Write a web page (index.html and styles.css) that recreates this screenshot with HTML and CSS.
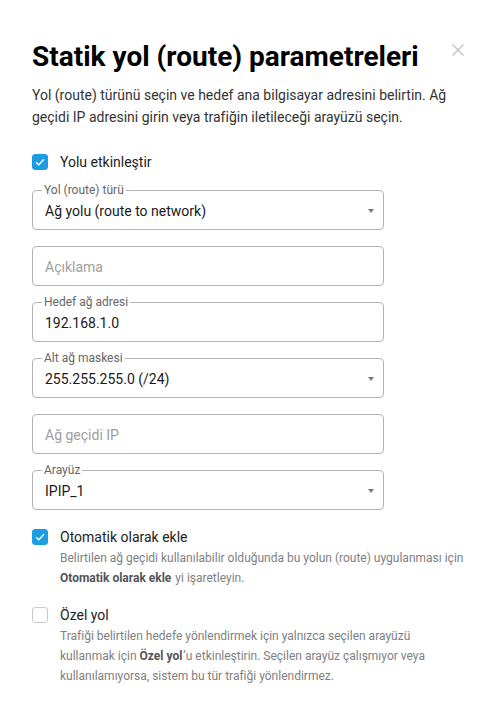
FILE: index.html
```html
<!DOCTYPE html>
<html lang="tr">
<head>
<meta charset="utf-8">
<title>Statik yol (route) parametreleri</title>
<link rel="stylesheet" href="styles.css">
</head>
<body>
<div class="dialog">
  <div class="header">
    <h1 class="title">Statik yol (route) parametreleri</h1>
    <button class="close" aria-label="Kapat">
      <svg width="12" height="12" viewBox="0 0 12 12"><path d="M0.5 0.5 L11.5 11.5 M11.5 0.5 L0.5 11.5" stroke="#c6c6c6" stroke-width="1.5" fill="none"/></svg>
    </button>
  </div>
  <p class="intro">Yol (route) türünü seçin ve hedef ana bilgisayar adresini belirtin. Ağ geçidi IP adresini girin veya trafiğin iletileceği arayüzü seçin.</p>

  <label class="check-row first">
    <span class="box checked"><svg width="10" height="8" viewBox="0 0 10 8"><path d="M1 4.2 L3.8 6.8 L9 1.2" stroke="#fff" stroke-width="1.3" fill="none"/></svg></span>
    <span class="check-label">Yolu etkinleştir</span>
  </label>

  <div class="fields">
    <div class="field select">
      <span class="legend">Yol (route) türü</span>
      <span class="value">Ağ yolu (route to network)</span>
      <span class="arrow"></span>
    </div>
    <div class="field">
      <span class="value placeholder">Açıklama</span>
    </div>
    <div class="field">
      <span class="legend">Hedef ağ adresi</span>
      <span class="value">192.168.1.0</span>
    </div>
    <div class="field select">
      <span class="legend">Alt ağ maskesi</span>
      <span class="value">255.255.255.0 (/24)</span>
      <span class="arrow"></span>
    </div>
    <div class="field">
      <span class="value placeholder">Ağ geçidi IP</span>
    </div>
    <div class="field select">
      <span class="legend">Arayüz</span>
      <span class="value">IPIP_1</span>
      <span class="arrow"></span>
    </div>
  </div>

  <div class="option">
    <label class="check-row">
      <span class="box checked"><svg width="10" height="8" viewBox="0 0 10 8"><path d="M1 4.2 L3.8 6.8 L9 1.2" stroke="#fff" stroke-width="1.3" fill="none"/></svg></span>
      <span class="check-label">Otomatik olarak ekle</span>
    </label>
    <p class="hint"><span class="line">Belirtilen ağ geçidi kullanılabilir olduğunda bu yolun (route) uygulanması için</span><span class="line"><b>Otomatik olarak ekle</b> yi işaretleyin.</span></p>
  </div>

  <div class="option">
    <label class="check-row">
      <span class="box"></span>
      <span class="check-label">Özel yol</span>
    </label>
    <p class="hint"><span class="line">Trafiği belirtilen hedefe yönlendirmek için yalnızca seçilen arayüzü</span><span class="line">kullanmak için <b>Özel yol</b>’u etkinleştirin. Seçilen arayüz çalışmıyor veya</span><span class="line">kullanılamıyorsa, sistem bu tür trafiği yönlendirmez.</span></p>
  </div>
</div>
</body>
</html>
```

FILE: styles.css
```css
* { box-sizing: border-box; }

html, body {
  margin: 0;
  padding: 0;
  background: #fff;
}

body {
  font-family: Roboto, "Noto Sans", "Liberation Sans", sans-serif;
  color: #222;
}

.dialog {
  width: 500px;
  padding: 40px 32px 0 32px;
}

.header {
  display: flex;
  justify-content: space-between;
  align-items: flex-start;
}

.title {
  margin: 0;
  font-size: 28px;
  line-height: 34px;
  font-weight: 700;
  color: #000;
}

.close {
  border: 0;
  background: none;
  padding: 0;
  margin: 4px 4px 0 0;
  width: 12px;
  height: 12px;
  display: flex;
  cursor: pointer;
}

.intro {
  margin: 10px 0 0 0;
  font-size: 14px;
  line-height: 22px;
  color: #333;
}

.check-row {
  display: flex;
  align-items: center;
  gap: 12px;
  height: 16px;
}

.check-row.first {
  margin-top: 26px;
}

.box {
  width: 16px;
  height: 16px;
  border-radius: 3px;
  border: 1px solid #c8c8c8;
  background: #fff;
  display: flex;
  align-items: center;
  justify-content: center;
  flex: none;
}

.box.checked {
  background: #1a9de3;
  border-color: #1a9de3;
}

.check-label {
  font-size: 14px;
  line-height: 16px;
  color: #222;
}

.fields {
  margin-top: 20px;
  display: flex;
  flex-direction: column;
  gap: 16px;
  width: 352px;
}

.field {
  position: relative;
  height: 40px;
  border: 1px solid #b4b4b4;
  border-radius: 4px;
  display: flex;
  align-items: center;
  padding: 2px 9px 0 12px;
}

.legend {
  position: absolute;
  top: -8px;
  left: 9px;
  padding: 0 2px;
  background: #fff;
  font-size: 12px;
  line-height: 14px;
  color: #666;
}

.value {
  flex: 1;
  font-size: 14px;
  line-height: 18px;
  color: #1a1a1a;
}

.value.placeholder {
  color: #9e9e9e;
}

.arrow {
  width: 0;
  height: 0;
  border-left: 3.5px solid transparent;
  border-right: 3.5px solid transparent;
  border-top: 4px solid #777;
}

.option {
  margin-top: 19px;
}

.hint {
  margin: 3px 0 0 0;
  padding-left: 28px;
  font-size: 12px;
  line-height: 20px;
  color: #808080;
}

.hint .line {
  display: block;
  white-space: nowrap;
}

.hint b {
  color: #555;
  font-weight: 700;
  margin-right: 1px;
}
```
